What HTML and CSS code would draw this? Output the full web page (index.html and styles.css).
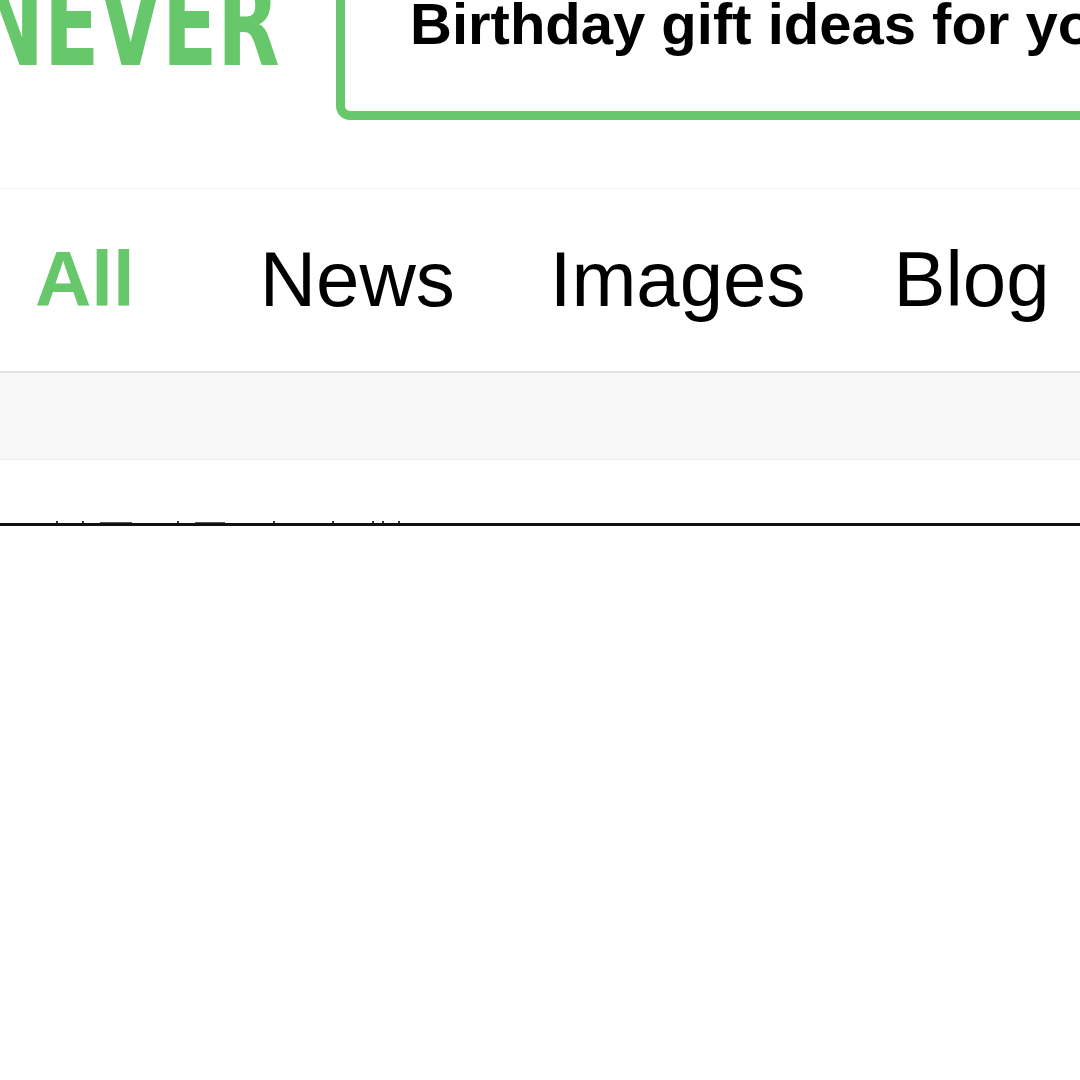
FILE: index.html
```html
<!DOCTYPE html>
<html lang="en">
<head>
<meta charset="utf-8">
<title>NEVER search</title>
<link rel="stylesheet" href="styles.css">
</head>
<body>
<div class="page">
  <header class="header">
    <div class="logo"><span class="logo-word">NEVER</span></div>
    <div class="search">
      <div class="search-text">Birthday gift ideas for your girlfriend</div>
    </div>
  </header>
  <nav class="tabs">
    <span class="tab tab-active">All</span>
    <span class="tab tab-news">News</span>
    <span class="tab tab-images">Images</span>
    <span class="tab tab-blog">Blog</span>
  </nav>
  <div class="band"></div>
  <div class="content">
    <div class="ticks">
      <span class="tk"></span><span class="tk"></span><span class="dash dash-a"></span><span class="tk"></span><span class="dash dash-b"></span><span class="tk"></span><span class="tk"></span><span class="tk"></span><span class="tk"></span><span class="tk"></span>
    </div>
    <div class="rule"></div>
  </div>
</div>
</body>
</html>
```
FILE: styles.css
```css
html, body {
  margin: 0;
  padding: 0;
  background: #ffffff;
}
.page {
  width: 1080px;
  height: 1080px;
  overflow: hidden;
  font-family: "Liberation Sans", Arial, sans-serif;
}
.header {
  height: 120px;
  display: flex;
  align-items: flex-start;
  overflow: hidden;
}
.logo {
  flex: none;
  width: 336px;
  box-sizing: border-box;
  padding-right: 56px;
  margin-top: -36px;
  display: flex;
  justify-content: flex-end;
}
.logo-word {
  flex: none;
  display: block;
  font-family: "DejaVu Sans Condensed", "DejaVu Sans", sans-serif;
  font-stretch: condensed;
  font-weight: 700;
  font-size: 120px;
  line-height: 120px;
  color: #66c86a;
  white-space: nowrap;
  transform: scaleX(0.75);
  transform-origin: right center;
}
.search {
  flex: none;
  align-self: flex-end;
  width: 900px;
  height: 180px;
  box-sizing: border-box;
  border: 9px solid #66c86a;
  border-radius: 14px;
  display: flex;
  align-items: flex-end;
  padding: 0 0 58px 65px;
}
.search-text {
  font-weight: 700;
  font-size: 58px;
  line-height: 58px;
  color: #000;
  white-space: nowrap;
}
.tabs {
  margin-top: 68px;
  border-top: 1px solid #f4f4f4;
  border-bottom: 2px solid #e3e3e3;
  padding: 51px 0 53px 35px;
  display: flex;
  white-space: nowrap;
}
.tab {
  font-size: 78px;
  line-height: 78px;
  color: #000;
}
.tab-active {
  color: #66c86a;
  font-weight: 700;
}
.tab-news { margin-left: 125px; }
.tab-images { margin-left: 95px; }
.tab-blog { margin-left: 88px; }
.band {
  height: 86px;
  background: #f8f8f8;
  border-bottom: 1px solid #eeeeee;
}
.content {
  padding-top: 61px;
}
.ticks {
  height: 2px;
  display: flex;
  align-items: flex-end;
}
.tk {
  flex: none;
  width: 2px;
  height: 2px;
  background: #333;
}
.dash {
  flex: none;
  height: 1px;
  background: #555;
}
.dash-a { width: 32px; }
.dash-b { width: 30px; }
.ticks > :nth-child(1) { margin-left: 56px; }
.ticks > :nth-child(2) { margin-left: 24px; }
.ticks > :nth-child(3) { margin-left: 16px; }
.ticks > :nth-child(4) { margin-left: 45px; }
.ticks > :nth-child(5) { margin-left: 16px; }
.ticks > :nth-child(6) { margin-left: 48px; }
.ticks > :nth-child(7) { margin-left: 57px; }
.ticks > :nth-child(8) { margin-left: 38px; }
.ticks > :nth-child(9) { margin-left: 8px; }
.ticks > :nth-child(10) { margin-left: 14px; }
.rule {
  height: 3px;
  background: #111111;
}
```
